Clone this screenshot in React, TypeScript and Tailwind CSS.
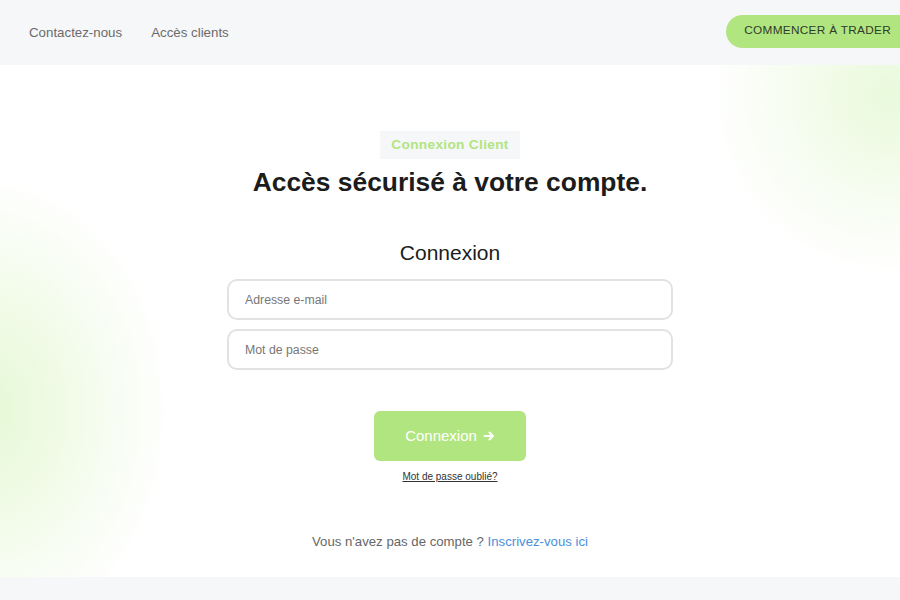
import React from 'react';

export default function App() {
  return (
    <div className="w-full min-h-[600px] bg-[#f6f7f9] font-['Liberation_Sans',Arial,sans-serif] overflow-hidden">
      {/* Header */}
      <header className="h-[65px] flex items-center justify-between pl-[29px]">
        <nav className="flex items-center gap-[29px] text-[13.3px] text-[#6b6b6b]">
          <a href="#">Contactez-nous</a>
          <a href="#">Accès clients</a>
        </nav>
        <button className="h-[33px] -mr-[20px] pl-[18px] pr-[29px] rounded-full bg-[#b1e57f] text-[#2f3b2a] text-[11.8px] tracking-[0.3px] mt-[-3px]">
          COMMENCER À TRADER
        </button>
      </header>

      {/* Main */}
      <main className="relative h-[512px] bg-white overflow-hidden">
        {/* decorative glows */}
        <div className="absolute left-[-200px] top-[110px] w-[370px] h-[470px] rounded-full bg-[radial-gradient(closest-side,rgba(215,245,190,0.65),rgba(225,247,205,0.38)_55%,rgba(255,255,255,0))]" />
        <div className="absolute right-[-170px] top-[-150px] w-[360px] h-[360px] rounded-full bg-[radial-gradient(closest-side,rgba(215,245,190,0.55),rgba(225,247,205,0.3)_55%,rgba(255,255,255,0))]" />

        <div className="relative flex flex-col items-center pt-[66px]">
          <span className="px-[11px] h-[28px] flex items-center bg-[#f6f7f9] text-[#b1e57f] text-[13.7px] font-bold tracking-[0.3px]">
            Connexion Client
          </span>
          <h1 className="mt-[5px] text-[26.4px] leading-[36px] font-bold text-[#1c1c1c]">
            Accès sécurisé à votre compte.
          </h1>

          <h2 className="mt-[40px] text-[21px] leading-[26px] text-[#1c1c1c]">Connexion</h2>

          <form className="mt-[13px] w-[446px] flex flex-col gap-[9px]">
            <input
              type="email"
              placeholder="Adresse e-mail"
              className="h-[41px] w-full rounded-[10px] border-2 border-[#e2e2e2] px-[16px] text-[12.3px] text-[#333] placeholder-[#777] outline-none"
            />
            <input
              type="password"
              placeholder="Mot de passe"
              className="h-[41px] w-full rounded-[10px] border-2 border-[#e2e2e2] px-[16px] text-[12.3px] text-[#333] placeholder-[#777] outline-none"
            />
          </form>

          <button className="mt-[41px] w-[152px] h-[50px] rounded-[6px] bg-[#b1e57f] text-white text-[15px] flex items-center justify-center gap-[6px]">
            Connexion
            <svg width="12" height="12" viewBox="0 0 12 12" fill="none" stroke="white" strokeWidth="2" strokeLinecap="round" strokeLinejoin="round">
              <path d="M1.5 6h8.5M6.5 2.5L10 6l-3.5 3.5" />
            </svg>
          </button>

          <a href="#" className="mt-[8px] text-[10px] text-[#333] underline">Mot de passe oublié?</a>

          <p className="mt-[48px] text-[13.2px] text-[#666]">
            Vous n'avez pas de compte ? <a href="#" className="text-[#4a8fdc]">Inscrivez-vous ici</a>
          </p>
        </div>
      </main>
    </div>
  );
}
